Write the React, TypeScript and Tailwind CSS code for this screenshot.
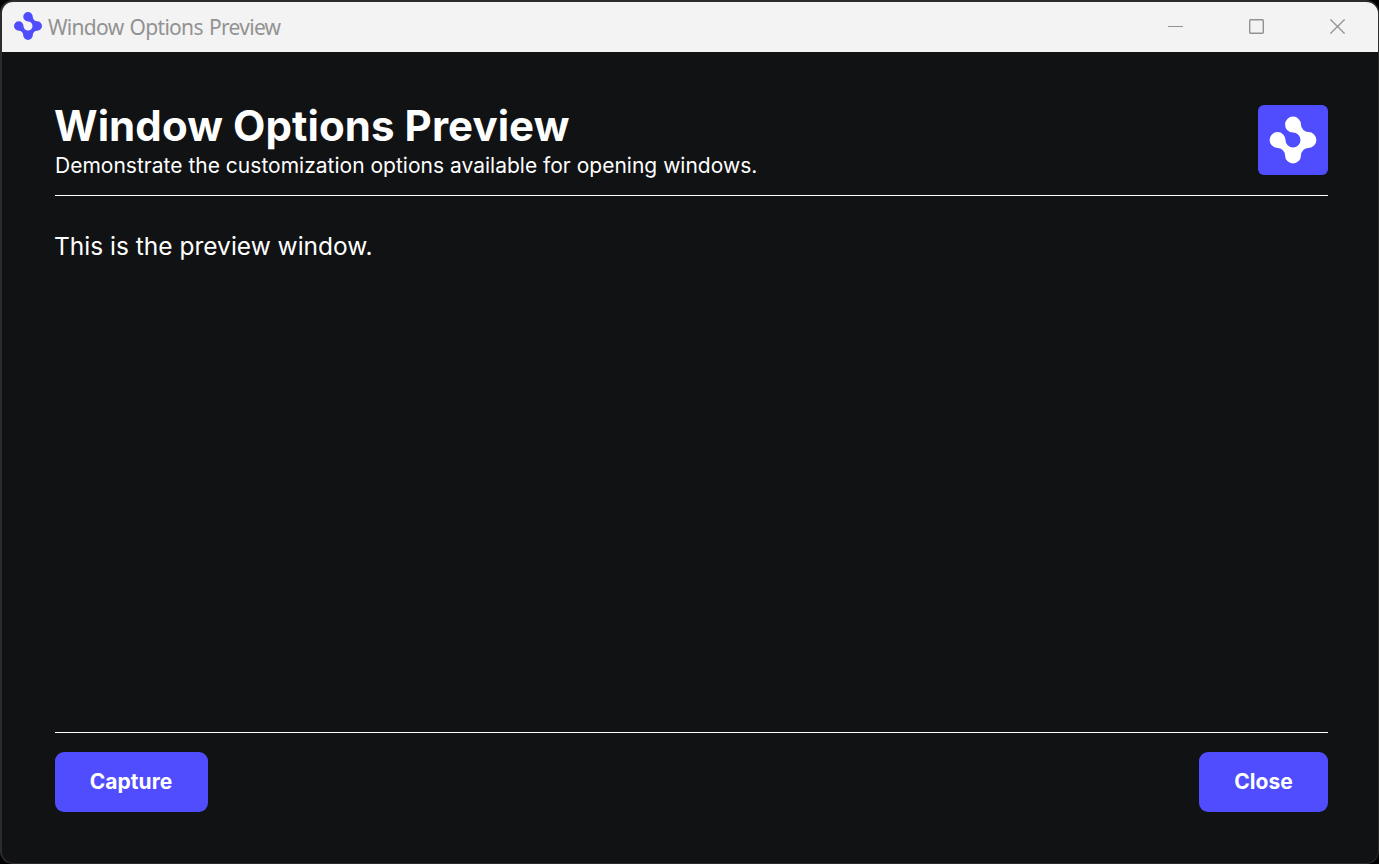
const MARK =
  'M27.5 35A7.95 7.95 0 1 0 19.55 42.95A7.5 7.5 0 0 1 27.05 50.45A7.95 7.95 0 0 0 42.95 50.45A7.5 7.5 0 0 1 50.45 42.95A7.95 7.95 0 0 0 50.45 27.05A7.5 7.5 0 0 1 42.95 19.55A7.95 7.95 0 1 0 35 27.5A7.5 7.5 0 1 1 27.5 35Z';

function Mark({ className, viewBox }: { className: string; viewBox: string }) {
  return (
    <svg viewBox={viewBox} className={className} fill="currentColor">
      <path d={MARK} />
    </svg>
  );
}

function TitleBar() {
  return (
    <header className="flex h-[50px] shrink-0 items-center bg-[#f3f3f3] pl-3 text-[#929292]">
      <Mark viewBox="11.6 11.6 46.8 46.8" className="mb-0.5 size-7 text-[#4f4dff]" />
      <span className="ml-1.5 flex-1 whitespace-nowrap font-['Noto_Sans',sans-serif] text-[21px] leading-[50px] tracking-[-0.7px] [word-spacing:1.4px]">
        Window Options Preview
      </span>
      <div className="flex h-full pb-0.5">
        <button aria-label="Minimize" className="flex w-[81px] items-center justify-center">
          <svg className="size-[15px]" viewBox="0 0 15 15" stroke="currentColor" fill="none">
            <path d="M0 7.5H15" />
          </svg>
        </button>
        <button aria-label="Maximize" className="flex w-[81px] items-center justify-center">
          <svg className="size-[15px]" viewBox="0 0 15 15" stroke="currentColor" fill="none" strokeWidth="1.4">
            <rect x="0.7" y="0.7" width="13.6" height="13.6" rx="1" />
          </svg>
        </button>
        <button aria-label="Close window" className="flex w-[81px] items-center justify-center">
          <svg className="size-[15px]" viewBox="0 0 15 15" stroke="currentColor" fill="none" strokeWidth="1.3">
            <path d="M0.4 0.4L14.6 14.6M14.6 0.4L0.4 14.6" />
          </svg>
        </button>
      </div>
    </header>
  );
}

export default function App() {
  return (
    <div className="h-[864px] w-[1379px] bg-black">
      <div className="flex h-full flex-col overflow-hidden rounded-[13px] border-t-2 border-r border-b border-l-2 border-[#2c2c2d] bg-[#111214] font-['Inter',sans-serif] text-white">
        <TitleBar />
        <main className="flex flex-1 flex-col pt-[53px] pr-[50px] pb-[51px] pl-[53px]">
          <div className="flex h-[91px] justify-between border-b border-white">
            <div>
              <h1 className="-ml-px text-[42px] font-bold leading-[42px] tracking-[0.08px]">Window Options Preview</h1>
              <p className="text-[21px] leading-[38px] tracking-[0.01px]">
                Demonstrate the customization options available for opening windows.
              </p>
            </div>
            <div className="flex size-[70px] items-center justify-center rounded-[6px] bg-[#4f4dff]">
              <Mark viewBox="11 11 48 48" className="size-12" />
            </div>
          </div>
          <p className="mt-[33px] -ml-px flex-1 text-[24.5px] leading-[34px]">This is the preview window.</p>
          <footer className="flex justify-between border-t border-white pt-[19px] text-[21px] font-bold tracking-[0.05px]">
            <button className="h-[60px] w-[153px] rounded-[9px] bg-[#4f4dff] pr-px pb-px">Capture</button>
            <button className="h-[60px] w-[129px] rounded-[9px] bg-[#4f4dff] pb-px">Close</button>
          </footer>
        </main>
      </div>
    </div>
  );
}
